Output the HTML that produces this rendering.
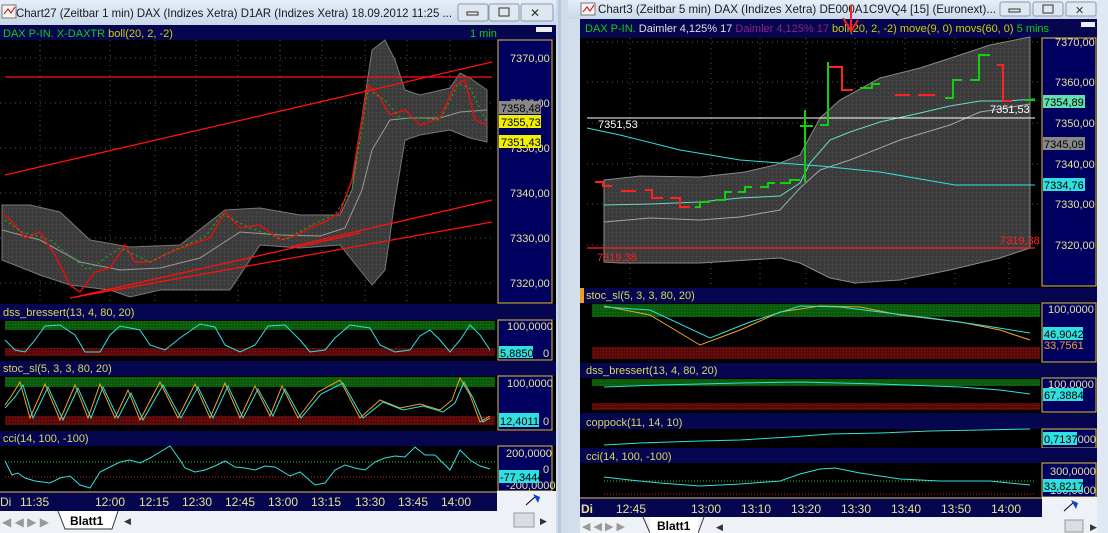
<!DOCTYPE html>
<html><head><meta charset="utf-8"><style>
body{margin:0;width:1108px;height:533px;overflow:hidden;background:#dfe8f3;font-family:"Liberation Sans",sans-serif}
svg{display:block}
text{font-family:"Liberation Sans",sans-serif}
</style></head><body>
<svg width="1108" height="533" viewBox="0 0 1108 533" xmlns="http://www.w3.org/2000/svg">
<defs>
<linearGradient id="tb" x1="0" y1="0" x2="0" y2="1"><stop offset="0" stop-color="#e6eef8"/><stop offset="1" stop-color="#c9d8ea"/></linearGradient>
<pattern id="dots" width="4" height="4" patternUnits="userSpaceOnUse"><rect width="4" height="4" fill="#3c3c3c"/><rect width="1" height="1" fill="#555"/></pattern>
<pattern id="grn" width="3" height="3" patternUnits="userSpaceOnUse"><rect width="3" height="3" fill="#0b5a0b"/><rect width="1" height="1" fill="#1a7a1a"/></pattern>
<pattern id="red" width="3" height="3" patternUnits="userSpaceOnUse"><rect width="3" height="3" fill="#5a0808"/><rect width="1" height="1" fill="#7a1a1a"/></pattern>
</defs>
<rect width="1108" height="533" fill="#dfe8f3"/>

<!-- LEFT WINDOW -->
<rect x="0" y="0" width="557" height="25" fill="url(#tb)"/>
<rect x="2" y="5" width="14" height="13" fill="#f4f4f4" stroke="#777"/><path d="M4 14 L8 9 L11 13 L15 7" stroke="#c00" fill="none"/>
<text x="16" y="17" font-size="12" fill="#1a1a1a" textLength="436" lengthAdjust="spacingAndGlyphs">Chart27 (Zeitbar 1 min)  DAX (Indizes Xetra) D1AR (Indizes Xetra) 18.09.2012 11:25 ...</text>
<rect x="458" y="4" width="30" height="17" fill="#dfe7f1" stroke="#8a9ab0" rx="2"/><rect x="467" y="12" width="11" height="3" fill="none" stroke="#333"/>
<rect x="489" y="4" width="30" height="17" fill="#dfe7f1" stroke="#8a9ab0" rx="2"/><rect x="499" y="8" width="10" height="8" fill="none" stroke="#333"/>
<rect x="521" y="4" width="32" height="17" fill="#dfe7f1" stroke="#8a9ab0" rx="2"/><text x="530" y="17" font-size="12" fill="#333">✕</text>
<rect x="0" y="25" width="557" height="485" fill="#000"/>
<rect x="0" y="25" width="557" height="15" fill="#050550"/>
<text x="3" y="37" font-size="11" fill="#10d010">DAX P-IN. X-DAXTR <tspan fill="#d0d000">boll(20, 2, -2)</tspan></text>
<text x="470" y="37" font-size="11" fill="#10d010">1 min</text>
<rect x="536" y="27" width="16" height="5" fill="#eee"/>
<g stroke="#555" stroke-dasharray="1,4">
<path d="M0 58H495M0 103H495M0 148H495M0 193H495M0 238H495M0 283H495"/>
<path d="M40 40V303M110 40V303M155 40V303M196 40V303M238 40V303M280 40V303M322 40V303M365 40V303M407 40V303M450 40V303"/>
</g>
<path d="M2 205 L30 205 L60 212 L90 240 L130 247 L180 245 L225 210 L260 208 L300 215 L340 215 L352 190 L360 130 L372 50 L385 40 L395 60 L405 90 L420 95 L450 88 L460 73 L470 78 L487 90 L487 142 L470 138 L450 130 L420 135 L405 140 L395 200 L385 270 L372 285 L360 270 L340 245 L300 248 L260 245 L230 290 L160 290 L130 297 L110 290 L70 285 L40 275 L2 260Z" fill="url(#dots)" stroke="#777"/>
<polyline points="2,230 40,240 80,262 120,270 160,268 200,258 240,232 280,235 320,236 345,228 362,190 372,150 390,120 410,118 440,118 460,112 487,110" fill="none" stroke="#999"/>
<polyline points="5,215 15,225 25,238 40,232 55,255 70,285 80,292 95,272 110,268 125,245 135,262 150,262 170,252 190,245 210,238 225,212 240,228 260,225 280,240 295,236 310,228 325,222 340,212 352,180 360,130 368,85 378,95 390,115 405,110 420,125 440,118 455,85 465,80 475,120 487,125" fill="none" stroke="#e01010" stroke-width="1.5"/>
<polyline points="5,220 22,232 50,240 88,270 120,248 150,262 175,250 205,237 222,214 250,228 285,240 310,226 335,214 352,190 368,90 385,100 400,118 420,118 440,120 458,84 470,88 487,123" fill="none" stroke="#10c010" stroke-width="1" stroke-dasharray="2,3"/>
<g stroke="#ff1010" stroke-width="1.3">
<path d="M5 77H492"/><path d="M5 175L492 62"/><path d="M70 298L492 222"/><path d="M290 247L492 200"/><path d="M75 297L360 233"/>
</g>
<rect x="498" y="40" width="54" height="263" fill="#000060" stroke="#e0c040"/>
<g font-size="11" fill="#e8e090">
<text x="510" y="62">7370,00</text><text x="510" y="107">7360,00</text><text x="510" y="152">7350,00</text><text x="510" y="197">7340,00</text><text x="510" y="242">7330,00</text><text x="510" y="287">7320,00</text></g>
<rect x="499" y="101" width="42" height="13" fill="#888"/><text x="501" y="112" font-size="11" fill="#000">7358,48</text>
<rect x="499" y="115" width="42" height="13" fill="#f0f000"/><text x="501" y="126" font-size="11" fill="#000">7355,73</text>
<rect x="499" y="135" width="42" height="13" fill="#f0f000"/><text x="501" y="146" font-size="11" fill="#000">7351,43</text>

<!-- dss -->
<rect x="0" y="304" width="557" height="16" fill="#050550"/>
<text x="3" y="316" font-size="11" fill="#d8d860">dss_bressert(13, 4, 80, 20)</text>
<rect x="5" y="321" width="490" height="9" fill="url(#grn)"/><rect x="5" y="348" width="490" height="8" fill="url(#red)"/>
<polyline points="5,340 15,350 25,352 35,340 45,326 60,325 75,335 85,352 100,352 110,335 120,326 140,330 150,345 165,350 180,338 200,324 215,327 225,345 240,352 255,345 268,326 285,325 300,340 310,352 325,350 335,338 350,325 370,328 380,345 395,352 410,350 420,336 430,330 440,340 450,352 460,340 470,325 480,335 490,350" fill="none" stroke="#30e0e0"/>
<rect x="498" y="320" width="54" height="40" fill="#000060" stroke="#e0c040"/>
<text x="507" y="330" font-size="11" fill="#e8e090">100,0000</text>
<rect x="499" y="346" width="34" height="12" fill="#30e0e0"/><text x="500" y="357" font-size="11" fill="#000">5,8850</text><text x="543" y="357" font-size="11" fill="#e8e090">0</text>
<!-- stoc -->
<rect x="0" y="361" width="557" height="15" fill="#050550"/>
<text x="3" y="372" font-size="11" fill="#d8d860">stoc_sl(5, 3, 3, 80, 20)</text>
<rect x="5" y="377" width="490" height="10" fill="url(#grn)"/><rect x="5" y="416" width="490" height="9" fill="url(#red)"/>
<polyline points="5,405 12,395 20,382 30,418 45,384 60,420 75,385 88,418 100,384 115,418 128,390 140,420 160,382 178,418 195,384 210,418 225,383 240,418 255,386 270,416 282,386 298,418 318,392 340,380 360,418 380,400 400,408 420,404 440,410 452,400 460,378 470,395 480,422 490,416" fill="none" stroke="#f0a020"/>
<polyline points="5,408 15,397 23,385 33,418 48,387 63,420 78,388 91,418 103,387 118,418 131,393 143,420 163,385 181,418 198,387 213,418 228,386 243,418 258,389 273,416 285,389 301,418 321,394 343,383 363,418 383,402 403,410 423,406 443,412 455,403 464,382 473,398 483,422 490,418" fill="none" stroke="#30e0e0"/>
<rect x="498" y="376" width="54" height="54" fill="#000060" stroke="#e0c040"/>
<text x="507" y="387" font-size="11" fill="#e8e090">100,0000</text>
<rect x="499" y="413" width="40" height="14" fill="#30e0e0"/><text x="500" y="425" font-size="11" fill="#000">12,4011</text><text x="543" y="425" font-size="11" fill="#e8e090">0</text>
<!-- cci -->
<rect x="0" y="431" width="557" height="15" fill="#050550"/>
<text x="3" y="442" font-size="11" fill="#d8d860">cci(14, 100, -100)</text>
<path d="M5 462H495" stroke="#20d020" stroke-dasharray="1,2"/><path d="M5 477H495" stroke="#d02020" stroke-dasharray="1,2"/>
<polyline points="5,461 12,475 18,473 25,478 35,481 50,483 60,478 70,476 80,485 90,488 100,472 110,467 120,462 130,460 140,463 150,458 160,452 170,446 180,460 185,468 195,472 205,470 215,466 225,461 235,467 245,468 255,470 265,466 275,467 290,476 300,472 315,485 325,483 335,470 345,465 355,468 365,470 375,462 385,458 395,456 405,457 415,447 425,455 435,455 450,470 460,450 470,460 480,466 490,469" fill="none" stroke="#30e0e0"/>
<rect x="498" y="446" width="54" height="45" fill="#000060" stroke="#e0c040"/>
<text x="506" y="457" font-size="11" fill="#e8e090">200,0000</text><text x="543" y="473" font-size="11" fill="#e8e090">0</text><text x="506" y="489" font-size="11" fill="#e8e090">-200,0000</text>
<rect x="499" y="470" width="40" height="13" fill="#30e0e0"/><text x="500" y="481" font-size="11" fill="#000">-77,3444</text>
<!-- time axis -->
<rect x="0" y="491" width="497" height="20" fill="#050550"/><path d="M0 492H497" stroke="#e0c040"/>
<rect x="497" y="491" width="60" height="20" fill="#eef2f8"/>
<path d="M526 505 L536 496" stroke="#000"/><path d="M533 494 L540 497 L538 503 Z" fill="#1040d0"/>
<g font-size="12" fill="#e8e090"><text x="0" y="506">Di</text><text x="20" y="506">11:35</text><text x="95" y="506">12:00</text><text x="139" y="506">12:15</text><text x="182" y="506">12:30</text><text x="225" y="506">12:45</text><text x="268" y="506">13:00</text><text x="311" y="506">13:15</text><text x="355" y="506">13:30</text><text x="398" y="506">13:45</text><text x="441" y="506">14:00</text></g>
<rect x="0" y="511" width="557" height="22" fill="#eef1f6"/>
<text x="2" y="526" font-size="12" fill="#999">◀ ◀ ▶ ▶</text>
<path d="M58 511 L65 529 L112 529 L118 511" fill="#fff" stroke="#333"/>
<text x="70" y="525" font-size="12" font-weight="bold" fill="#000">Blatt1</text>
<text x="124" y="524" font-size="9" fill="#333">◀</text>
<rect x="514" y="513" width="20" height="14" fill="#d8dde6" stroke="#999"/><text x="540" y="524" font-size="9" fill="#333">▶</text>
<rect x="556" y="0" width="14" height="533" fill="#cfdbea"/>
<rect x="558" y="0" width="3" height="533" fill="#b7c8dc"/>

<!-- RIGHT WINDOW -->
<rect x="568" y="0" width="529" height="19" fill="url(#tb)"/>
<rect x="581" y="3" width="14" height="12" fill="#f4f4f4" stroke="#777"/><path d="M583 12 L587 7 L590 11 L594 5" stroke="#c00" fill="none"/>
<text x="598" y="13" font-size="12" fill="#1a1a1a" textLength="398" lengthAdjust="spacingAndGlyphs">Chart3 (Zeitbar 5 min)  DAX (Indizes Xetra) DE000A1C9VQ4 [15] (Euronext)...</text>
<rect x="1000" y="2" width="30" height="14" fill="#dfe7f1" stroke="#8a9ab0" rx="2"/><rect x="1009" y="9" width="11" height="3" fill="none" stroke="#333"/>
<rect x="1033" y="2" width="30" height="14" fill="#dfe7f1" stroke="#8a9ab0" rx="2"/><rect x="1043" y="5" width="10" height="8" fill="none" stroke="#333"/>
<rect x="1066" y="2" width="30" height="14" fill="#dfe7f1" stroke="#8a9ab0" rx="2"/><text x="1075" y="14" font-size="11" fill="#333">✕</text>
<rect x="568" y="19" width="12" height="514" fill="#d2deec"/>
<rect x="580" y="19" width="517" height="498" fill="#000"/>
<rect x="580" y="19" width="517" height="19" fill="#050550"/>
<text x="585" y="32" font-size="11" fill="#10d010">DAX P-IN. <tspan fill="#e0e0e0">Daimler  4,125% 17 </tspan><tspan fill="#902090">Daimler  4,125% 17 </tspan><tspan fill="#d0d000">boll(20, 2, -2) move(9, 0) movs(60, 0)</tspan>   5 mins</text>
<rect x="1081" y="22" width="14" height="5" fill="#eee"/>
<g stroke="#555" stroke-dasharray="1,4">
<path d="M587 42H1040M587 82H1040M587 123H1040M587 164H1040M587 204H1040M587 245H1040"/>
<path d="M630 38V286M711 38V286M760 38V286M806 38V286M855 38V286M905 38V286M955 38V286M1009 38V286"/>
</g>
<path d="M604 180 L640 176 L700 177 L745 172 L775 165 L800 155 L820 118 L840 100 L880 78 L920 68 L960 55 L990 45 L1030 37 L1030 248 L1000 258 L950 270 L900 280 L855 283 L830 278 L800 263 L780 258 L700 263 L620 263 L604 262 Z" fill="url(#dots)" stroke="#888"/>
<polyline points="604,222 650,218 700,220 740,217 780,210 800,188 820,170 850,160 900,140 950,125 980,112 1000,109 1030,104" fill="none" stroke="#9aa"/>
<polyline points="604,205 650,204 700,202 740,198 780,196 800,183 810,163 830,140 850,132 880,122 920,113 950,106 980,101 1005,101 1035,99" fill="none" stroke="#60e0c0"/>
<polyline points="587,128 620,135 680,150 740,160 820,166 880,172 955,185 1035,185" fill="none" stroke="#30e0e0"/>
<path d="M587 118H1035" stroke="#fff"/>
<path d="M587 248H1035" stroke="#ff2020" stroke-width="1.3"/>
<text x="598" y="128" font-size="11" fill="#fff">7351,53</text>
<text x="990" y="113" font-size="11" fill="#fff">7351,53</text>
<text x="597" y="261" font-size="11" fill="#ff2020">7319,38</text>
<text x="1000" y="244" font-size="11" fill="#ff2020">7319,38</text>
<g stroke="#ff2020" stroke-width="2" fill="none">
<path d="M595 182H603V186H612M621 191H636M645 190H652V198H663M670 198H680V207H690"/>
<path d="M828 67H842V90H853M895 95H910M918 95H935"/>
<path d="M997 65H1003V101H1012"/>
<path d="M851 5V30M843 18L851 31L858 20"/>
</g>
<g stroke="#10d010" stroke-width="2" fill="none">
<path d="M695 207H700V202H710M715 200H725V192H732M738 192H745V187H752M760 187H768V183H775M780 183H790V180H800"/>
<path d="M805 110V182M800 126H813M828 62V126M820 125H828"/>
<path d="M860 88H872V84H880M945 98H953V80H962M970 80H979V55H990M1025 100H1035"/>
</g>
<rect x="1042" y="38" width="54" height="248" fill="#000060" stroke="#e0c040"/>
<g font-size="11" fill="#e8e090"><text x="1055" y="46">7370,00</text><text x="1055" y="86">7360,00</text><text x="1055" y="127">7350,00</text><text x="1055" y="168">7340,00</text><text x="1055" y="208">7330,00</text><text x="1055" y="249">7320,00</text></g>
<rect x="1043" y="95" width="42" height="13" fill="#60e0b0"/><text x="1044" y="106" font-size="11" fill="#000">7354,89</text>
<rect x="1043" y="137" width="42" height="13" fill="#888"/><text x="1044" y="148" font-size="11" fill="#000">7345,09</text>
<rect x="1043" y="178" width="42" height="13" fill="#30e0e0"/><text x="1044" y="189" font-size="11" fill="#000">7334,76</text>

<!-- stoc right -->
<rect x="580" y="288" width="517" height="15" fill="#050550"/><rect x="580" y="288" width="4" height="15" fill="#f0a020"/>
<text x="586" y="299" font-size="11" fill="#d8d860">stoc_sl(5, 3, 3, 80, 20)</text>
<rect x="592" y="304" width="448" height="13" fill="url(#grn)"/><rect x="592" y="347" width="448" height="12" fill="url(#red)"/>
<polyline points="604,306 650,315 700,345 740,330 780,312 820,306 860,307 900,315 960,322 1000,330 1030,340" fill="none" stroke="#f0a020"/>
<polyline points="604,307 650,310 710,338 750,322 800,306 840,307 880,312 930,318 980,325 1030,333" fill="none" stroke="#30e0e0"/>
<rect x="1042" y="303" width="54" height="59" fill="#000060" stroke="#e0c040"/>
<text x="1048" y="313" font-size="11" fill="#e8e090">100,0000</text>
<rect x="1043" y="327" width="40" height="13" fill="#30e0e0"/><text x="1044" y="338" font-size="11" fill="#000">46,9042</text>
<text x="1044" y="349" font-size="11" fill="#f0a020">33,7561</text>
<!-- dss right -->
<rect x="580" y="363" width="517" height="15" fill="#050550"/>
<text x="586" y="374" font-size="11" fill="#d8d860">dss_bressert(13, 4, 80, 20)</text>
<rect x="592" y="379" width="448" height="7" fill="url(#grn)"/><rect x="592" y="403" width="448" height="7" fill="url(#red)"/>
<polyline points="604,387 660,385 740,383 800,382 880,384 960,387 1000,390 1030,394" fill="none" stroke="#30e0e0"/>
<rect x="1042" y="378" width="54" height="34" fill="#000060" stroke="#e0c040"/>
<text x="1048" y="388" font-size="11" fill="#e8e090">100,0000</text>
<rect x="1043" y="388" width="40" height="13" fill="#30e0e0"/><text x="1044" y="399" font-size="11" fill="#000">67,3884</text>
<!-- coppock -->
<rect x="580" y="413" width="517" height="16" fill="#050550"/>
<text x="586" y="426" font-size="11" fill="#d8d860">coppock(11, 14, 10)</text>
<polyline points="604,445 640,443 700,441 740,440 790,437 830,434 880,433 930,431 980,430 1030,429" fill="none" stroke="#30e0e0"/>
<rect x="1042" y="429" width="54" height="19" fill="#000060" stroke="#e0c040"/>
<rect x="1043" y="432" width="34" height="13" fill="#30e0e0"/><text x="1044" y="443" font-size="11" fill="#000">0,7137<tspan fill="#e8e090">000</tspan></text>
<!-- cci right -->
<rect x="580" y="448" width="517" height="15" fill="#050550"/>
<text x="586" y="460" font-size="11" fill="#d8d860">cci(14, 100, -100)</text>
<path d="M604 481H1035" stroke="#20d020" stroke-dasharray="1,2"/><path d="M604 494H1035" stroke="#d02020" stroke-dasharray="1,2"/>
<polyline points="604,477 630,480 660,483 700,486 740,484 780,481 800,474 820,469 835,468 860,473 900,479 940,481 990,481 1030,485" fill="none" stroke="#30e0e0"/>
<rect x="1042" y="463" width="54" height="34" fill="#000060" stroke="#e0c040"/>
<text x="1050" y="475" font-size="11" fill="#e8e090">300,0000</text><text x="1050" y="494" font-size="11" fill="#e8e090">100,0000</text>
<rect x="1043" y="479" width="40" height="13" fill="#30e0e0"/><text x="1044" y="490" font-size="11" fill="#000">33,8217</text>
<!-- time right -->
<rect x="580" y="497" width="462" height="20" fill="#050550"/><path d="M580 498H1042" stroke="#e0c040"/>
<rect x="1042" y="497" width="55" height="20" fill="#eef2f8"/>
<path d="M1064 511 L1074 502" stroke="#000"/><path d="M1071 500 L1078 503 L1076 509 Z" fill="#1040d0"/>
<g font-size="12" fill="#e8e090"><text x="581" y="513" font-weight="bold">Di</text><text x="616" y="513">12:45</text><text x="691" y="513">13:00</text><text x="741" y="513">13:10</text><text x="791" y="513">13:20</text><text x="841" y="513">13:30</text><text x="891" y="513">13:40</text><text x="941" y="513">13:50</text><text x="991" y="513">14:00</text></g>
<rect x="580" y="517" width="517" height="16" fill="#eef1f6"/>
<text x="582" y="530" font-size="11" fill="#999">◀ ◀ ▶ ▶</text>
<path d="M643 517 L650 533 M698 533 L704 517" stroke="#333"/><rect x="650" y="517" width="48" height="16" fill="#fff"/>
<text x="657" y="530" font-size="12" font-weight="bold" fill="#000">Blatt1</text>
<text x="716" y="530" font-size="9" fill="#333">◀</text>
<rect x="1065" y="520" width="18" height="12" fill="#d8dde6" stroke="#999"/><text x="1090" y="530" font-size="9" fill="#333">▶</text>
<rect x="1097" y="0" width="11" height="533" fill="#dfe8f3"/>
</svg>
</body></html>
